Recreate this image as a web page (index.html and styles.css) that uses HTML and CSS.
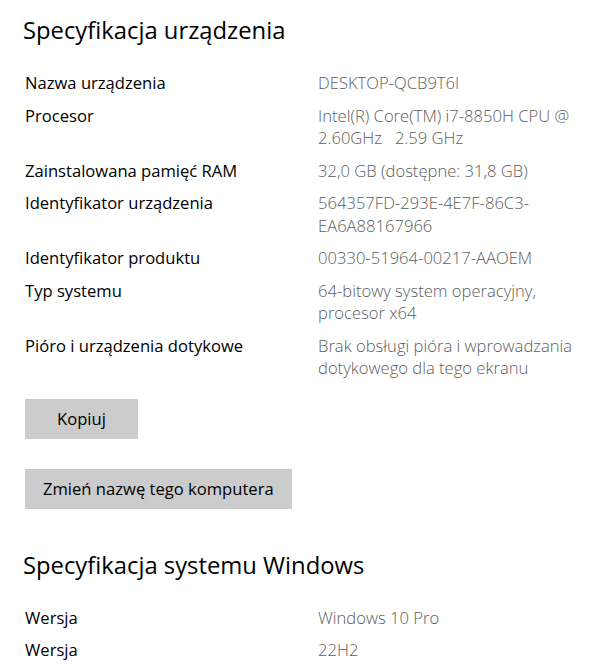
FILE: index.html
```html
<!DOCTYPE html>
<html lang="pl">
<head>
<meta charset="utf-8">
<link rel="stylesheet" href="styles.css">
</head>
<body>
<main class="page">
  <h1 class="title">Specyfikacja urządzenia</h1>
  <dl class="specs">
    <dt>Nazwa urządzenia</dt><dd>DESKTOP-QCB9T6I</dd>
    <dt>Procesor</dt><dd>Intel(R) Core(TM) i7-8850H CPU @ 2.60GHz&nbsp;&nbsp; 2.59 GHz</dd>
    <dt>Zainstalowana pamięć RAM</dt><dd>32,0 GB (dostępne: 31,8 GB)</dd>
    <dt>Identyfikator urządzenia</dt><dd>564357FD-293E-4E7F-86C3-EA6A88167966</dd>
    <dt>Identyfikator produktu</dt><dd>00330-51964-00217-AAOEM</dd>
    <dt>Typ systemu</dt><dd>64-bitowy system operacyjny, procesor x64</dd>
    <dt>Pióro i urządzenia dotykowe</dt><dd>Brak obsługi pióra i wprowadzania dotykowego dla tego ekranu</dd>
  </dl>
  <div class="actions">
    <button class="btn">Kopiuj</button>
    <button class="btn">Zmień nazwę tego komputera</button>
  </div>
  <h1 class="title title-2">Specyfikacja systemu Windows</h1>
  <dl class="specs">
    <dt>Wersja</dt><dd>Windows 10 Pro</dd>
    <dt>Wersja</dt><dd>22H2</dd>
  </dl>
</main>
</body>
</html>
```

FILE: styles.css
```css
html, body {
  margin: 0;
  padding: 0;
  background: #ffffff;
}

body {
  font-family: "Open Sans", "Noto Sans", sans-serif;
  color: #000000;
}

.page {
  padding: 10px 0 0 25px;
}

.title {
  margin: 0 0 0 -2px;
  font-size: 23.8px;
  font-weight: 400;
  line-height: 40px;
  color: #000000;
}

.title-2 {
  margin-top: 36px;
}

.specs {
  display: grid;
  grid-template-columns: 293px 275px;
  row-gap: 10px;
  margin: 22px 0 0 0;
  font-size: 16.6px;
  line-height: 22.5px;
}

.title-2 + .specs {
  margin-top: 22px;
}

.specs dt {
  margin: 0;
  color: #000000;
}

.specs dd {
  margin: 0;
  color: #5d5d5d;
  font-weight: 300;
}

.actions {
  display: flex;
  flex-direction: column;
  align-items: flex-start;
  gap: 30px;
  margin-top: 19px;
}

.btn {
  height: 40px;
  min-width: 113px;
  padding: 0 18px;
  border: none;
  background: #cccccc;
  color: #000000;
  font-family: inherit;
  font-size: 16.6px;
}
```
